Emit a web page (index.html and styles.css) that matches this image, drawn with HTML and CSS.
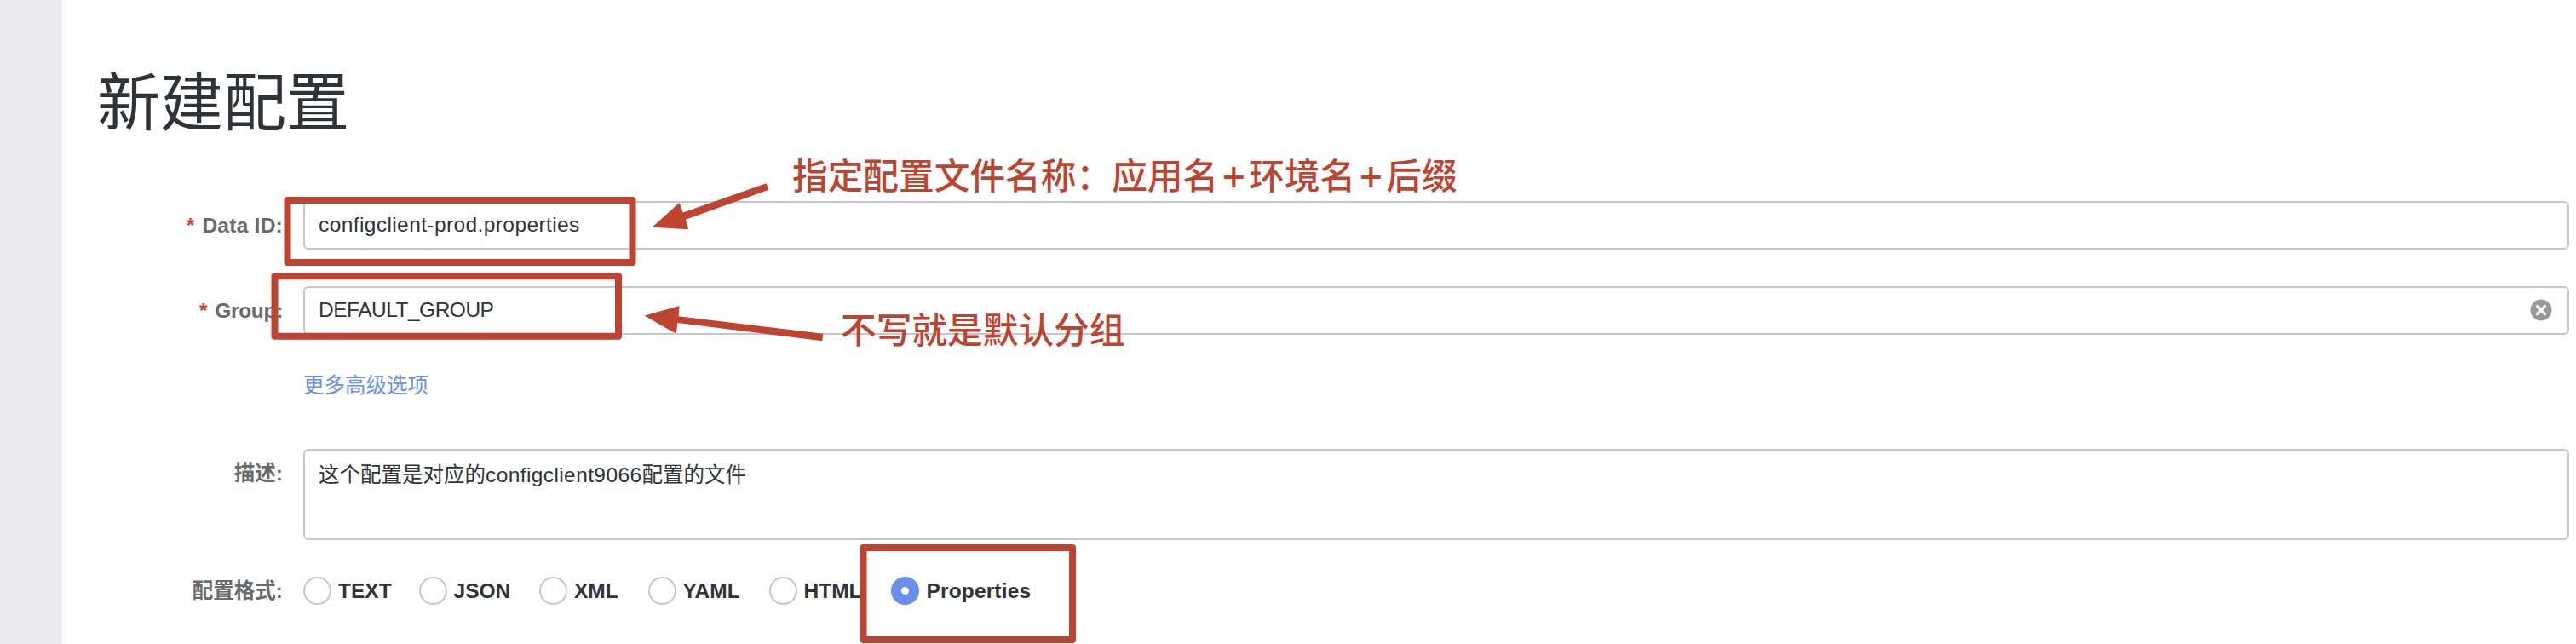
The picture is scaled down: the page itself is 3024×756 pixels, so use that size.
FILE: index.html
```html
<!DOCTYPE html>
<html lang="zh-CN">
<head>
<meta charset="utf-8">
<title>新建配置</title>
<link rel="stylesheet" href="styles.css">
</head>
<body>
<div class="app">
  <aside class="sidebar"></aside>
  <main class="main">
    <h1 class="title">新建配置</h1>
    <form class="form">
      <div class="row row-data">
        <div class="label label-data"><span class="req">*</span>Data ID:</div>
        <div class="input latin">configclient-prod.properties</div>
      </div>
      <div class="row row-group">
        <div class="label label-group"><span class="req">*</span>Group:</div>
        <div class="input caps">DEFAULT_GROUP
          <svg class="clear" viewBox="0 0 26 26"><circle cx="13" cy="13" r="12.5"/><path d="M8.5 8.5l9 9M17.5 8.5l-9 9"/></svg>
        </div>
      </div>
      <div class="row row-more">
        <a class="more">更多高级选项</a>
      </div>
      <div class="row row-desc">
        <div class="label">描述:</div>
        <div class="input textarea">这个配置是对应的<span class="latin">configclient9066</span>配置的文件</div>
      </div>
      <div class="row row-format">
        <div class="label">配置格式:</div>
        <div class="radios">
          <span class="radio"><i class="dot"></i>TEXT</span>
          <span class="radio"><i class="dot"></i>JSON</span>
          <span class="radio"><i class="dot"></i>XML</span>
          <span class="radio"><i class="dot"></i>YAML</span>
          <span class="radio"><i class="dot"></i>HTML</span>
          <span class="radio radio-wide"><i class="dot checked"></i>Properties</span>
        </div>
      </div>
    </form>
  </main>
  <svg class="marks" viewBox="0 0 3024 756">
    <g class="frames">
      <rect x="337.5" y="235" width="405" height="73"/>
      <rect x="322.5" y="324.3" width="403.5" height="70.5"/>
      <rect x="1013.5" y="643" width="245.5" height="108"/>
    </g>
    <g class="arrows">
      <path d="M765.5 266.8L797.5 238L801.8 249.5L899.5 215.2L902.5 222.8L804.8 257.8L808.2 269.2Z"/>
      <path d="M756.5 370.5L797.6 359L796.6 371.2L966.3 391.8L965.3 400.2L795.4 379L793.7 391.8Z"/>
    </g>
  </svg>
  <div class="note note-id">指定配置文件名称：应用名<span class="plus">+</span>环境名<span class="plus">+</span>后缀</div>
  <div class="note note-group">不写就是默认分组</div>
</div>
</body>
</html>
```
FILE: styles.css
```css
* { box-sizing: border-box; }
body {
  margin: 0;
  background: #fff;
  font-family: "Liberation Sans", "Noto Sans CJK SC", sans-serif;
  font-size: 24.5px;
  color: #2e3338;
}
.app { position: relative; display: flex; width: 3024px; height: 756px; overflow: hidden; }
.sidebar { width: 73px; background: #ebebef; }
.main { flex: 1; padding: 60px 8px 0 41px; }
.title {
  margin: 0;
  height: 176px;
  font-family: "Noto Sans CJK SC", sans-serif;
  font-size: 74px;
  font-weight: 400;
  line-height: 109px;
}
.row { display: grid; grid-template-columns: 218px 1fr; column-gap: 24px; }
.row-data { margin-bottom: 43px; }
.row-group { margin-bottom: 41px; }
.row-more { margin-bottom: 56px; }
.row-desc { margin-bottom: 43px; }
.label { text-align: right; font-weight: 700; color: #666b6b; line-height: 57px; white-space: nowrap; }
.label-data { letter-spacing: 0.25px; }
.label-group { letter-spacing: -0.3px; }
.req { margin-right: 9px; color: #c0442f; }
.input {
  position: relative;
  height: 57px;
  padding-left: 16px;
  border: 2px solid #c6c6cd;
  border-radius: 6px;
  line-height: 52px;
  white-space: nowrap;
}
.latin { letter-spacing: 0.4px; }
.caps { letter-spacing: -0.5px; }
.textarea { height: 107px; line-height: 58px; }
.clear { position: absolute; right: 18px; top: 13px; width: 26px; height: 26px; }
.clear circle { fill: #94999b; }
.clear path { stroke: #fff; stroke-width: 3.2; stroke-linecap: round; }
.more { grid-column: 2; height: 37px; line-height: 37px; color: #6a8fe8; }
.row-format .label { line-height: 34px; }
.radios { display: grid; grid-template-columns: 135.5px 141.5px 127.5px 142px 143px 200px; }
.radio { display: flex; align-items: center; height: 33px; gap: 8px; font-weight: 700; }
.radio-wide { gap: 9px; letter-spacing: 0.15px; }
.dot { width: 33px; height: 33px; border: 2px solid #c6c6cd; border-radius: 50%; }
.dot.checked { border: 12.5px solid #6a8fe8; background: #fff; }
.marks { position: absolute; left: 0; top: 0; width: 3024px; height: 756px; }
.frames rect { fill: none; stroke: #bd4430; stroke-width: 8; stroke-linejoin: round; }
.arrows path { fill: #bd4430; }
.note {
  position: absolute;
  font-family: "Noto Sans CJK SC", sans-serif;
  font-size: 41.7px;
  font-weight: 500;
  line-height: 60px;
  color: #bd4430;
  white-space: nowrap;
}
.note-id { left: 930px; top: 174px; }
.note-group { left: 987px; top: 355px; }
.plus { display: inline-block; width: 36px; font-size: 46px; line-height: 40px; text-align: center; vertical-align: -3px; }
```
